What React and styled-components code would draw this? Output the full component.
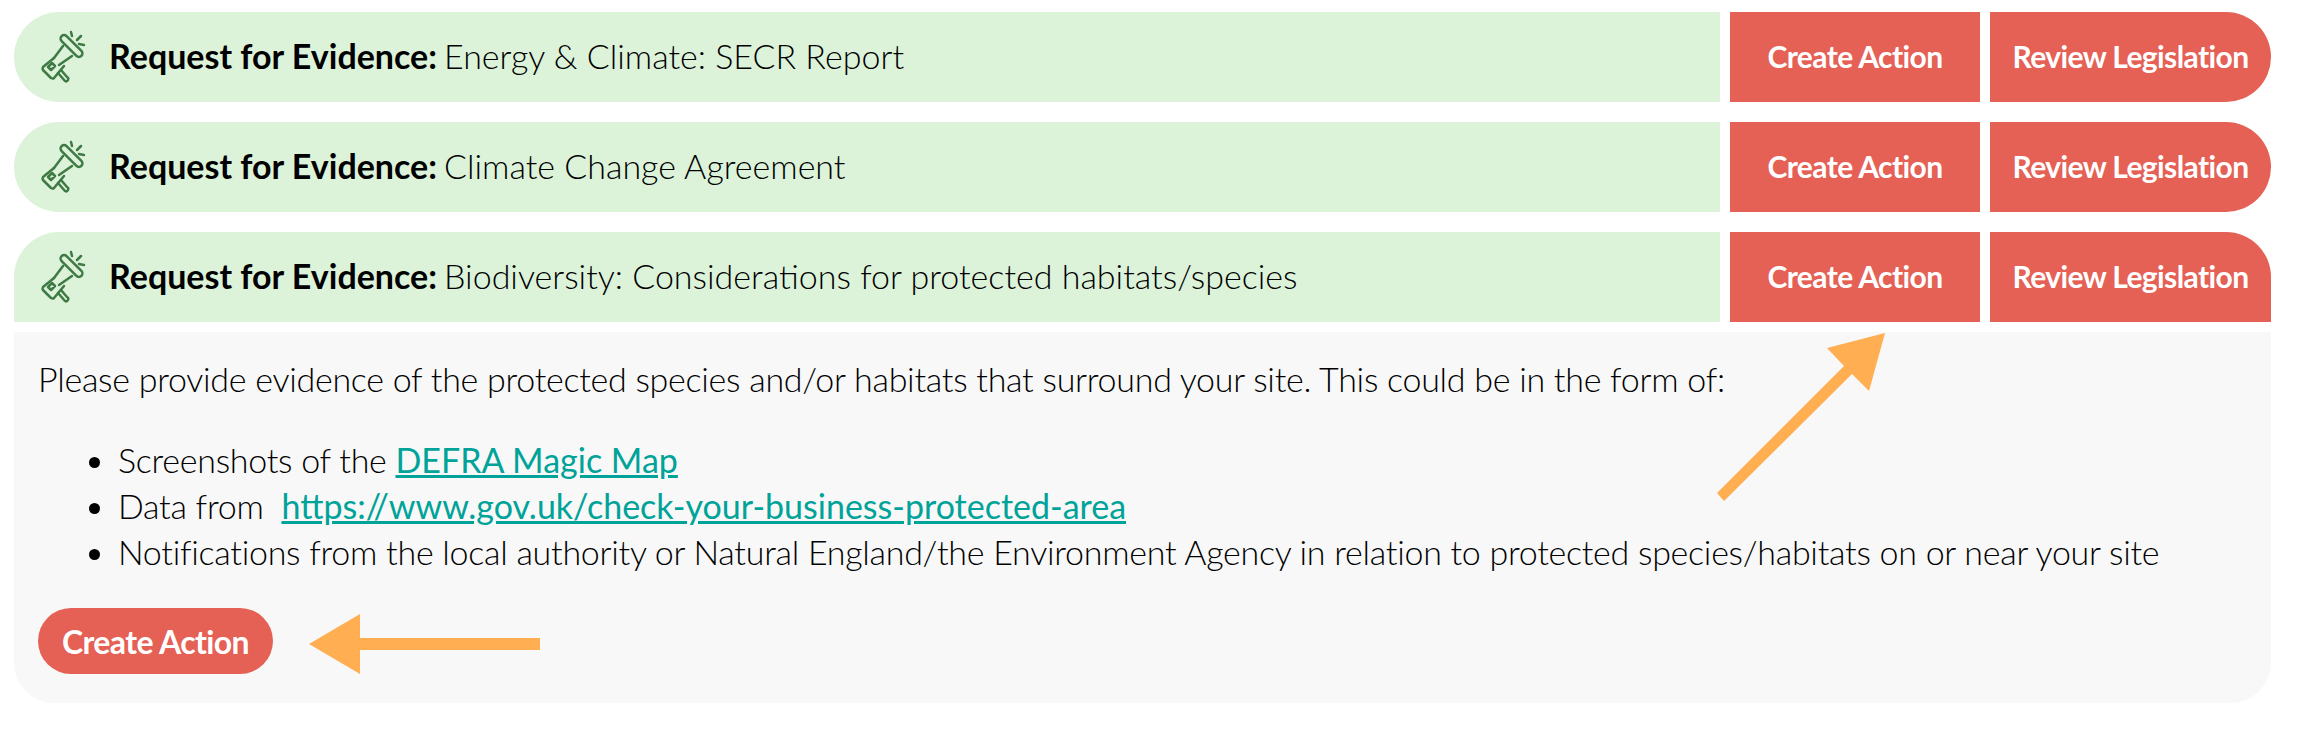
import styled, { createGlobalStyle } from "styled-components";

const GlobalStyle = createGlobalStyle`
  html, body {
    margin: 0;
    padding: 0;
    background: #fff;
    font-family: Lato, "Open Sans", sans-serif;
    color: #000;
  }
`;

const colors = {
  green: "#dcf3da",
  icon: "#3f7a45",
  red: "#e56055",
  grey: "#f8f8f8",
  teal: "#00a399",
  orange: "#ffae52",
};

const Page = styled.div`
  position: relative;
  width: 2310px;
  height: 732px;
  padding: 12px 39px 0 14px;
  box-sizing: border-box;
  display: flex;
  flex-direction: column;
  overflow: hidden;
`;

const Row = styled.div`
  display: flex;
  gap: 10px;
  height: 90px;
  margin-bottom: ${(p) => (p.$open ? "10px" : "20px")};
`;

const Title = styled.div`
  flex: 1;
  display: flex;
  align-items: center;
  background: ${colors.green};
  border-radius: ${(p) => (p.$open ? "45px 0 0 0" : "45px 0 0 45px")};
  padding: 0 0 3px 24px;
  font-size: 34px;
  font-weight: 300;
`;

const IconWrap = styled.svg`
  width: 52px;
  height: 56px;
  margin: 3px 19px 0 0;
  flex-shrink: 0;
`;

const Label = styled.strong`
  font-weight: 700;
  margin-right: 7px;
`;

const RowButton = styled.button`
  width: ${(p) => (p.$wide ? "281px" : "250px")};
  border: 0;
  background: ${colors.red};
  color: #fff;
  font-family: inherit;
  font-size: 30px;
  font-weight: 700;
  letter-spacing: -0.6px;
  padding: 0 0 3px;
  border-radius: ${(p) =>
    p.$wide ? (p.$open ? "0 45px 0 0" : "0 45px 45px 0") : "0"};
`;

const Panel = styled.div`
  background: ${colors.grey};
  height: 371px;
  box-sizing: border-box;
  border-radius: 0 0 40px 40px;
  padding: 24px 24px 0;
  font-size: 34px;
  font-weight: 300;
  letter-spacing: -0.27px;
`;

const Intro = styled.p`
  margin: 0;
  line-height: 46px;
`;

const Bullets = styled.ul`
  margin: 35px 0 0;
  padding: 0 0 0 80px;
  line-height: 46px;
`;

const Link = styled.a`
  color: ${colors.teal};
  font-weight: 400;
  letter-spacing: 0;
  text-decoration: underline;
`;

const PillButton = styled.button`
  display: block;
  width: 235px;
  height: 66px;
  margin-top: 33px;
  border: 0;
  border-radius: 33px;
  background: ${colors.red};
  color: #fff;
  font-family: inherit;
  font-size: 32px;
  font-weight: 700;
  letter-spacing: -0.6px;
  padding: 0;
`;

const ArrowLayer = styled.svg`
  position: absolute;
  left: 0;
  top: 0;
  pointer-events: none;
`;

function Megaphone() {
  return (
    <IconWrap viewBox="18 14 52 56" fill="none" stroke={colors.icon} strokeWidth="2.5" strokeLinecap="round" strokeLinejoin="round">
      <rect x="-3.5" y="-14" width="7" height="28" rx="3.5" transform="translate(51.5 31) rotate(-45)" />
      <path d="M43 31 L34 43" />
      <path d="M52 41 L39 50" />
      <path d="M34 43 L23 52 Q22 54 23 55 L31 63 Q33 64 34 63 L44 51" />
      <path d="M28 52 L32 48 L35 51 L31 55 Z" />
      <path d="M38 58 L45 66 Q47 67 48 65 Q49 63 47 62 L41 55" />
      <path d="M51 17 L52 21 M61 21 L57 25 M64 30 L59 29" />
    </IconWrap>
  );
}

function ItemRow({ title, open }) {
  return (
    <Row $open={open}>
      <Title $open={open}>
        <Megaphone />
        <Label>Request for Evidence:</Label> {title}
      </Title>
      <RowButton>Create Action</RowButton>
      <RowButton $wide $open={open}>Review Legislation</RowButton>
    </Row>
  );
}

export default function App() {
  return (
    <Page>
      <GlobalStyle />
      <ItemRow title="Energy & Climate: SECR Report" />
      <ItemRow title="Climate Change Agreement" />
      <ItemRow title="Biodiversity: Considerations for protected habitats/species" open />
      <Panel>
        <Intro>
          Please provide evidence of the protected species and/or habitats that surround your site. This could be in the form of:
        </Intro>
        <Bullets>
          <li>Screenshots of the <Link href="#">DEFRA Magic Map</Link></li>
          <li>Data from&nbsp; <Link href="#">https://www.gov.uk/check-your-business-protected-area</Link></li>
          <li>Notifications from the local authority or Natural England/the Environment Agency in relation to protected species/habitats on or near your site</li>
        </Bullets>
        <PillButton>Create Action</PillButton>
      </Panel>
      <ArrowLayer width="2310" height="732" fill={colors.orange}>
        <polygon points="1885,333 1869,391 1852,374 1724,501 1717,493 1844,366 1827,348" />
        <polygon points="309,644 360,614 360,638 540,638 540,650 360,650 360,674" />
      </ArrowLayer>
    </Page>
  );
}
